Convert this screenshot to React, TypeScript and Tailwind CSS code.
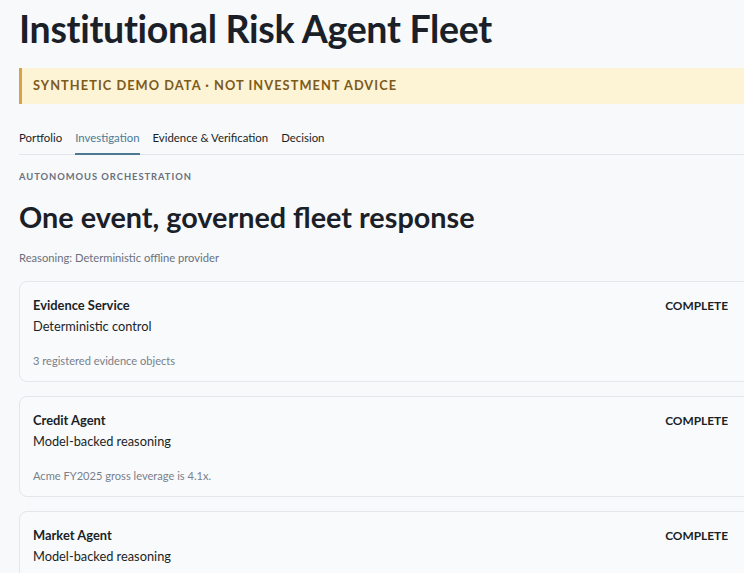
const agents = [
  { name: "Evidence Service", mode: "Deterministic control", note: "3 registered evidence objects" },
  { name: "Credit Agent", mode: "Model-backed reasoning", note: "Acme FY2025 gross leverage is 4.1x." },
  { name: "Market Agent", mode: "Model-backed reasoning", note: "Spread widening observed on Acme 2029 notes." },
]

const tabs = ["Portfolio", "Investigation", "Evidence & Verification", "Decision"]

export default function App() {
  return (
    <div className="h-[573px] w-[744px] overflow-hidden bg-[#f7f9fb] font-['Lato',sans-serif] text-[#1b1f27]">
      <div className="w-[800px] pl-[19px]">
        {/* HEADER */}
        <h1 className="pt-[3px] text-[37.5px] leading-[52px] font-bold tracking-[-0.3px]">
          Institutional Risk Agent Fleet
        </h1>

        {/* BANNER */}
        <div className="mt-[13px] flex h-[36px] items-center border-l-[3px] border-[#d4a34a] bg-[#fdf3d5] pl-[11px]">
          <span className="text-[12.8px] font-bold tracking-[1.05px] text-[#7c5a1c]">
            SYNTHETIC DEMO DATA · NOT INVESTMENT ADVICE
          </span>
        </div>

        {/* TABS */}
        <div className="mt-[25px] flex w-[781px] gap-[13px] border-b border-[#e2e5e9]">
          {tabs.map((t) => (
            <div
              key={t}
              className={
                t === "Investigation"
                  ? "-mb-px border-b-2 border-[#4d7891] pb-[6px] text-[11.4px] text-[#4a7a95]"
                  : "pb-[8px] text-[11.4px] text-[#1b1f27]"
              }
            >
              {t}
            </div>
          ))}
        </div>

        {/* SECTION */}
        <div className="mt-[15px] text-[9.4px] font-bold tracking-[0.95px] text-[#6b717c]">
          AUTONOMOUS ORCHESTRATION
        </div>
        <h2 className="mt-[14px] text-[28.8px] leading-[38px] font-bold">One event, governed fleet response</h2>
        <p className="mt-[14px] text-[11.2px] text-[#6b717c]">Reasoning: Deterministic offline provider</p>

        {/* AGENTS */}
        <div className="mt-[14px] flex flex-col gap-[14px]">
          {agents.map((a) => (
            <div
              key={a.name}
              className="h-[101px] rounded-[8px] border border-[#e3e6ea] bg-[#f8fafc] pl-[13px] pr-[71px] pt-[14px]"
            >
              <div className="flex items-center justify-between">
                <div className="text-[12.9px] font-bold">{a.name}</div>
                <div className="text-[11.9px] font-bold">COMPLETE</div>
              </div>
              <div className="mt-[2px] text-[12.8px]">{a.mode}</div>
              <div className="mt-[16px] text-[11.1px] text-[#7a8089]">{a.note}</div>
            </div>
          ))}
        </div>
      </div>
    </div>
  )
}
